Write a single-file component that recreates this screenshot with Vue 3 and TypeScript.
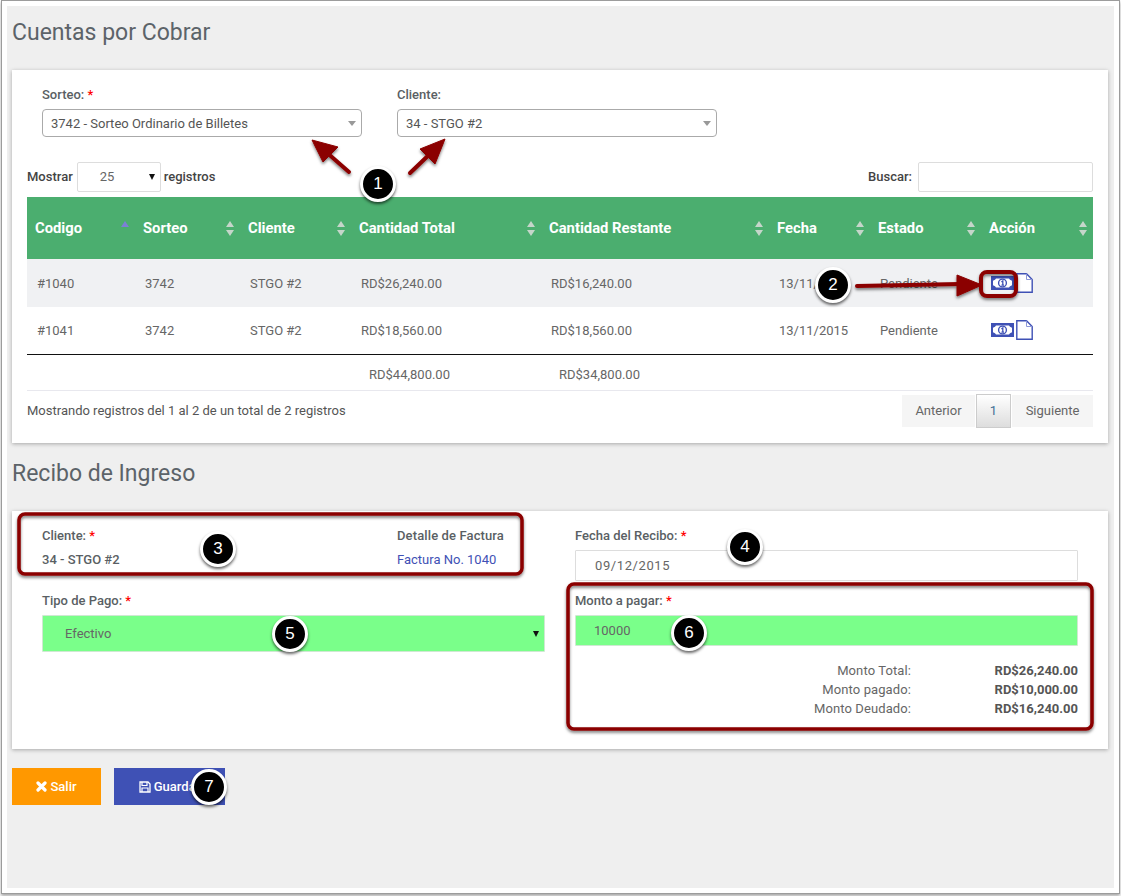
<script setup lang="ts">
type Row = {
  code: string
  sorteo: string
  cliente: string
  total: string
  restante: string
  fecha: string
  estado: string
}

const columns: { title: string; width: number }[] = [
  { title: 'Codigo', width: 108 },
  { title: 'Sorteo', width: 105 },
  { title: 'Cliente', width: 111 },
  { title: 'Cantidad Total', width: 190 },
  { title: 'Cantidad Restante', width: 228 },
  { title: 'Fecha', width: 101 },
  { title: 'Estado', width: 111 },
  { title: 'Acción', width: 112 },
]

const rows: Row[] = [
  { code: '#1040', sorteo: '3742', cliente: 'STGO #2', total: 'RD$26,240.00', restante: 'RD$16,240.00', fecha: '13/11/2015', estado: 'Pendiente' },
  { code: '#1041', sorteo: '3742', cliente: 'STGO #2', total: 'RD$18,560.00', restante: 'RD$18,560.00', fecha: '13/11/2015', estado: 'Pendiente' },
]

const totals = [
  { label: 'Monto Total:', value: 'RD$26,240.00' },
  { label: 'Monto pagado:', value: 'RD$10,000.00' },
  { label: 'Monto Deudado:', value: 'RD$16,240.00' },
]

const badges = [
  { n: '1', x: 378, y: 184 },
  { n: '2', x: 833, y: 285 },
  { n: '3', x: 218, y: 549 },
  { n: '4', x: 745, y: 547 },
  { n: '5', x: 290, y: 634 },
  { n: '6', x: 689, y: 633 },
  { n: '7', x: 209, y: 787 },
]
</script>

<template>
  <div class="frame">
    <div class="page">
      <h1 class="heading">Cuentas por Cobrar</h1>
      <section class="card card--list">
        <div class="filters">
          <div class="field">
            <label class="label">Sorteo: <span class="req">*</span></label>
            <div class="combo">3742 - Sorteo Ordinario de Billetes<i class="combo__caret"></i></div>
          </div>
          <div class="field">
            <label class="label">Cliente:</label>
            <div class="combo">34 - STGO #2<i class="combo__caret"></i></div>
          </div>
        </div>

        <div class="tools">
          <div class="tools__left">
            <span>Mostrar</span>
            <div class="length">25<i class="caret-black"></i></div>
            <span>registros</span>
          </div>
          <div class="tools__right">
            <span>Buscar:</span>
            <div class="search"></div>
          </div>
        </div>

        <table class="grid">
          <colgroup>
            <col v-for="c in columns" :key="c.title" :style="{ width: c.width + 'px' }" />
          </colgroup>
          <thead>
            <tr>
              <th v-for="(c, i) in columns" :key="c.title">
                <div class="th">
                  <span>{{ c.title }}</span>
                  <span class="sort">
                    <i class="sort__up" :class="{ 'sort__up--on': i === 0 }"></i>
                    <i class="sort__down" :class="{ 'sort__down--off': i === 0 }"></i>
                  </span>
                </div>
              </th>
            </tr>
          </thead>
          <tbody>
            <tr v-for="(r, i) in rows" :key="r.code" :class="{ odd: i === 0 }">
              <td>{{ r.code }}</td>
              <td>{{ r.sorteo }}</td>
              <td>{{ r.cliente }}</td>
              <td>{{ r.total }}</td>
              <td>{{ r.restante }}</td>
              <td>{{ r.fecha }}</td>
              <td>{{ r.estado }}</td>
              <td>
                <div class="actions">
                  <svg class="bill" width="23" height="14" viewBox="0 0 23 14">
                    <rect width="23" height="14" fill="#3f51b5" />
                    <path d="M5 2.6H18Q18.5 3.8 21 4.8V9.2Q18.5 10.2 18 11.4H5Q4.5 10.2 2 9.2V4.8Q4.5 3.8 5 2.6Z" fill="#fff" />
                    <circle cx="11.5" cy="7" r="3.9" fill="#fff" stroke="#3f51b5" stroke-width="1.4" />
                    <path d="M10.4 5.9L11.8 5V9.1M10.4 9.1H13" fill="none" stroke="#3f51b5" stroke-width="1.3" />
                  </svg>
                  <svg class="doc" width="17" height="20" viewBox="0 0 17 20">
                    <path d="M.8 .7H10.5L16.2 6.5V19.3H.8Z" fill="#fff" stroke="#3f51b5" stroke-width="1.4" />
                    <path d="M10.5 .7V6.5H16.2" fill="none" stroke="#8d97d8" stroke-width="1" />
                  </svg>
                </div>
              </td>
            </tr>
          </tbody>
          <tfoot>
            <tr>
              <td></td>
              <td></td>
              <td></td>
              <td class="sum">RD$44,800.00</td>
              <td class="sum">RD$34,800.00</td>
              <td></td>
              <td></td>
              <td></td>
            </tr>
          </tfoot>
        </table>

        <div class="info">
          <span>Mostrando registros del 1 al 2 de un total de 2 registros</span>
          <div class="pager">
            <span class="pager__btn pager__btn--prev">Anterior</span>
            <span class="pager__btn pager__btn--on">1</span>
            <span class="pager__btn pager__btn--next">Siguiente</span>
          </div>
        </div>
      </section>

      <h1 class="heading">Recibo de Ingreso</h1>
      <section class="card card--form">
        <div class="col">
          <div class="duo">
            <div>
              <div class="label">Cliente: <span class="req">*</span></div>
              <div class="static">34 - STGO #2</div>
            </div>
            <div>
              <div class="label label--wide">Detalle de Factura</div>
              <a class="link">Factura No. 1040</a>
            </div>
          </div>
          <div class="label label--low">Tipo de Pago: <span class="req">*</span></div>
          <div class="input input--green input--tall">Efectivo<i class="caret-black"></i></div>
        </div>
        <div class="col">
          <div class="label">Fecha del Recibo: <span class="req">*</span></div>
          <div class="input input--date">09/12/2015</div>
          <div class="label label--low2">Monto a pagar: <span class="req">*</span></div>
          <div class="input input--green input--amount">10000</div>
          <dl class="totals">
            <template v-for="t in totals" :key="t.label">
              <dt>{{ t.label }}</dt>
              <dd>{{ t.value }}</dd>
            </template>
          </dl>
        </div>
      </section>

      <div class="buttons">
        <button class="btn btn--exit">
          <svg width="11" height="11" viewBox="0 0 11 11">
            <path d="M2 2L9 9M9 2L2 9" stroke="#fff" stroke-width="3.2" stroke-linecap="round" />
          </svg>
          Salir
        </button>
        <button class="btn btn--save">
          <svg width="12" height="12" viewBox="0 0 12 12">
            <path d="M1 1H9L11 3V11H1Z" fill="none" stroke="#fff" stroke-width="1.3" />
            <path d="M3 1V4.5H8V1M3 11V7H9V11" fill="none" stroke="#fff" stroke-width="1.2" />
          </svg>
          Guardar
        </button>
      </div>
    </div>

    <!-- callouts laid over the screenshot -->
    <svg class="marks" width="1121" height="896" viewBox="0 0 1121 896">
      <defs>
        <filter id="soft" x="-20%" y="-20%" width="140%" height="140%">
          <feDropShadow dx="0" dy="2" stdDeviation="1.5" flood-color="#000" flood-opacity=".5" />
        </filter>
      </defs>
      <g fill="#8b0000" stroke="#8b0000" filter="url(#soft)">
        <path d="M349 172L325 151" stroke-width="4" stroke-linecap="round" />
        <path d="M312 140L338 147L323 162Z" stroke-width="1" />
        <path d="M410 173L433 151" stroke-width="4" stroke-linecap="round" />
        <path d="M445 139L435 164L420 149Z" stroke-width="1" />
        <path d="M857 286L960 284" stroke-width="4" stroke-linecap="round" />
        <path d="M982 285L957 275V296Z" stroke-width="1" />
        <g fill="none">
          <rect x="19" y="514" width="503" height="60" rx="6" stroke-width="3.5" />
          <rect x="568" y="584" width="524" height="145" rx="6" stroke-width="3.5" />
          <rect x="981" y="272" width="35" height="24" rx="6" stroke-width="4" />
        </g>
      </g>
    </svg>
    <span
      v-for="b in badges"
      :key="b.n"
      class="badge"
      :style="{ left: b.x + 'px', top: b.y + 'px' }"
    >{{ b.n }}</span>
  </div>
</template>

<style scoped>
.frame {
  position: relative;
  width: 1121px;
  height: 896px;
  overflow: hidden;
  font-family: Roboto, "Liberation Sans", sans-serif;
  font-size: 13px;
  color: #666;
}

.page {
  position: absolute;
  left: 7px;
  top: 6px;
  width: 1107px;
  height: 882px;
  padding: 15px 6px 0 5px;
  box-sizing: border-box;
  background: #efefef;
  box-shadow: 0 0 0 5px #fff, 0 0 0 6px #9c9c9c, 0 2px 3px 6px rgba(0, 0, 0, 0.35);
}

.heading {
  margin: 0 0 25px;
  font-size: 23px;
  line-height: 24px;
  font-weight: 400;
  color: #5c6369;
}

.card {
  background: #fff;
  box-shadow: 0 1px 4px rgba(0, 0, 0, 0.3);
  margin-bottom: 19px;
  box-sizing: border-box;
}

.card--list {
  height: 373px;
  padding: 17px 15px 0;
}

.label {
  font-weight: 500;
  line-height: 16px;
  color: #5a5f64;
}

.label--wide {
  letter-spacing: 0.12px;
}

.req {
  color: #f00;
}

.filters {
  display: flex;
  gap: 35px;
  padding-left: 15px;
}

.field {
  width: 320px;
  display: flex;
  flex-direction: column;
  gap: 6px;
}

.combo {
  position: relative;
  height: 28px;
  line-height: 28px;
  padding-left: 8px;
  box-sizing: border-box;
  border: 1px solid #aaa;
  border-radius: 4px;
  color: #555;
}

.combo__caret {
  position: absolute;
  right: 5px;
  top: 11px;
  border-style: solid;
  border-width: 5px 4px 0;
  border-color: #999 transparent transparent;
}

.tools {
  display: flex;
  justify-content: space-between;
  margin: 25px 0 5px;
  font-weight: 500;
  line-height: 28px;
  color: #444;
}

.tools__left,
.tools__right {
  display: flex;
  align-items: center;
}

.tools__right {
  gap: 6px;
}

.length {
  position: relative;
  width: 84px;
  height: 30px;
  margin: 0 3px 0 4px;
  line-height: 28px;
  padding-left: 22px;
  box-sizing: border-box;
  border: 1px solid #ddd;
  border-radius: 2px;
  font-weight: 400;
  color: #666;
}

.caret-black {
  position: absolute;
  border-style: solid;
  border-width: 6px 3.5px 0;
  border-color: #111 transparent transparent;
}

.length .caret-black {
  right: 5px;
  top: 11px;
}

.search {
  width: 175px;
  height: 30px;
  box-sizing: border-box;
  border: 1px solid #ddd;
  border-radius: 2px;
}

.grid {
  width: 1066px;
  table-layout: fixed;
  border-collapse: collapse;
}

.grid th {
  height: 62px;
  padding: 0 6px 0 8px;
  background: #4bae6f;
  color: #fff;
  font-size: 14.8px;
  font-weight: 700;
  text-align: left;
}

.th {
  display: flex;
  align-items: center;
  justify-content: space-between;
}

.sort {
  display: flex;
  flex-direction: column;
  gap: 3px;
}

.sort__up,
.sort__down {
  border-style: solid;
  border-color: transparent;
}

.sort__up {
  border-width: 0 4px 6px;
  border-bottom-color: #c5d6ca;
}

.sort__up--on {
  border-bottom-color: #7c80d6;
}

.sort__down {
  border-width: 6px 4px 0;
  border-top-color: #c5d6ca;
}

.sort__down--off {
  border-top-color: transparent;
}

.grid td {
  padding: 0 10px;
  color: #666;
}

.grid tbody tr {
  height: 47px;
}

.grid tbody tr.odd {
  height: 48px;
  background: #f0f1f3;
}

.grid tfoot td {
  height: 31px;
  padding-top: 4px;
  border-top: 1px solid #111;
  border-bottom: 1px solid #e8e8ee;
}

.grid tfoot td.sum {
  padding-left: 18px;
  padding-right: 0;
}

.actions {
  display: flex;
  align-items: center;
  gap: 2px;
}

.info {
  display: flex;
  align-items: center;
  justify-content: space-between;
  height: 40px;
  color: #555;
}

.pager {
  display: flex;
  align-items: center;
  gap: 1px;
}

.pager__btn {
  height: 32px;
  line-height: 32px;
  text-align: center;
  background: #f5f5f5;
  color: #666;
}

.pager__btn--prev {
  width: 73px;
}

.pager__btn--next {
  width: 81px;
}

.pager__btn--on {
  width: 35px;
  height: 34px;
  line-height: 32px;
  box-sizing: border-box;
  border: 1px solid #ccc;
  background: linear-gradient(#fff, #ddd);
  color: #3f6f96;
}

.card--form {
  height: 238px;
  padding: 17px 30px 0;
  display: grid;
  grid-template-columns: 503px 503px;
  gap: 30px;
}

.duo {
  display: grid;
  grid-template-columns: 355px 1fr;
}

.static {
  margin-top: 8px;
  font-weight: 500;
  line-height: 16px;
  color: #5a5f64;
}

.link {
  display: block;
  margin-top: 8px;
  line-height: 16px;
  color: #3f51b5;
}

.label--low {
  margin-top: 25px;
}

.label--low2 {
  margin-top: 12px;
}

.input {
  position: relative;
  box-sizing: border-box;
  margin-top: 6px;
  border: 1px solid #ddd;
  border-radius: 1px;
  color: #666;
}

.input--date {
  height: 31px;
  line-height: 29px;
  padding-left: 19px;
  letter-spacing: 0.6px;
}

.input--green {
  background: #7aff8a;
  border-color: #cfe8d2;
}

.input--tall {
  height: 37px;
  line-height: 35px;
  padding-left: 22px;
}

.input--tall .caret-black {
  right: 5px;
  top: 15px;
}

.input--amount {
  height: 31px;
  line-height: 29px;
  padding-left: 18px;
}

.totals {
  margin: 15px 0 0;
  display: grid;
  grid-template-columns: 336px 1fr;
  line-height: 19px;
}

.totals dt {
  text-align: right;
  letter-spacing: 0.1px;
}

.totals dd {
  margin: 0;
  text-align: right;
  font-weight: 700;
  color: #555;
}

.buttons {
  display: flex;
  gap: 13px;
}

.btn {
  display: flex;
  align-items: center;
  justify-content: center;
  gap: 3px;
  height: 37px;
  border: 0;
  color: #fff;
  font-family: inherit;
  font-size: 13px;
  font-weight: 500;
}

.btn--exit {
  width: 89px;
  background: #ff9800;
}

.btn--save {
  width: 111px;
  background: #3f51b5;
}

.marks {
  position: absolute;
  left: 0;
  top: 0;
  pointer-events: none;
}

.badge {
  position: absolute;
  width: 30px;
  height: 30px;
  margin: -18px 0 0 -18px;
  border: 3px solid #fff;
  border-radius: 50%;
  background: #000;
  box-shadow: 0 2px 3px rgba(0, 0, 0, 0.6);
  color: #fff;
  font-family: "Liberation Sans", sans-serif;
  font-size: 17px;
  line-height: 30px;
  text-align: center;
}
</style>
